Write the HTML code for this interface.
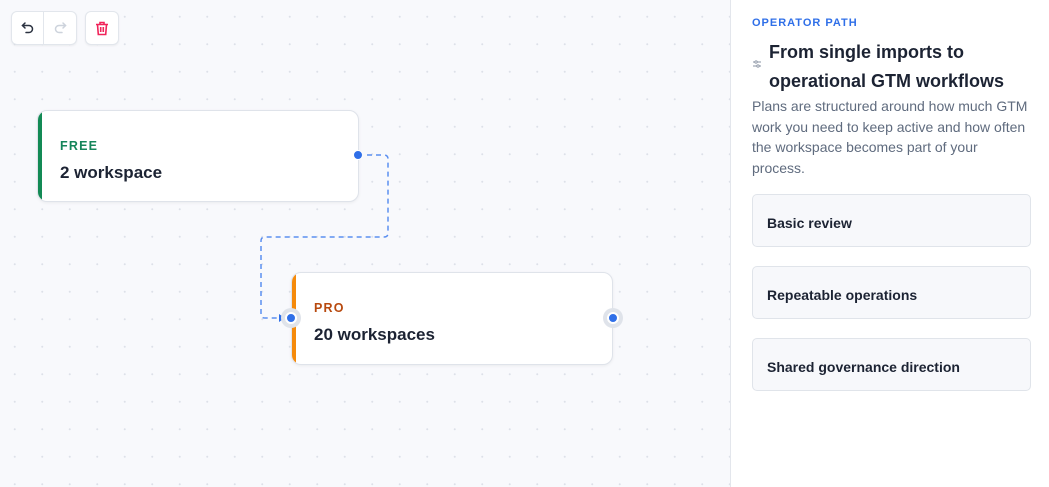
<!DOCTYPE html>
<html><head><style>
*{box-sizing:border-box;margin:0;padding:0}
body{width:1049px;height:487px;overflow:hidden;font-family:"Liberation Sans",Arial,sans-serif;background:#f8f9fc;position:relative}
.canvas{position:absolute;left:0;top:0;width:730px;height:487px;background-color:#f8f9fc;background-image:radial-gradient(circle,#dde1e8 0.8px,transparent 1.2px);background-size:27.5px 27.5px;background-position:1px 3px}
.tb{position:absolute;top:11px;height:34px;background:#fff;border:1px solid #e2e6ec;border-radius:6px;box-shadow:0 1px 2px rgba(0,0,0,.06);display:flex}
.tb div{width:32px;height:32px;display:flex;align-items:center;justify-content:center}
.node{position:absolute;background:#fff;border:1px solid #dfe3ea;border-radius:10px;box-shadow:0 1px 3px rgba(0,0,0,.06);overflow:hidden}
.node .bar{position:absolute;left:0;top:0;bottom:0;width:4px}
.lab{position:absolute;left:22px;top:28px;font-size:12.5px;font-weight:bold;letter-spacing:1.2px}
.val{position:absolute;left:22px;top:52px;font-size:17px;font-weight:bold;color:#1c2333}
.h{position:absolute;border-radius:50%}
.panel{position:absolute;left:730px;top:0;width:319px;height:487px;background:#fff;border-left:1px solid #e3e6ec}
.card{position:absolute;left:21px;width:279px;height:53px;background:#f7f8fb;border:1px solid #e0e4ea;border-radius:5px;font-size:14px;font-weight:bold;color:#1c2333;padding:20px 0 0 14px}
</style></head><body>
<div class="canvas"></div>
<div class="tb" style="left:11px;width:66px"><div style="border-right:1px solid #e2e6ec"><svg width="14" height="14" viewBox="0 0 14 14" fill="none" stroke="#2b3240" stroke-width="1.5" stroke-linecap="round"><path d="M4 2L1.5 4.5 4 7"/><path d="M1.5 4.5H8a3.5 3.5 0 0 1 0 7H5"/></svg></div><div><svg width="14" height="14" viewBox="0 0 14 14" fill="none" stroke="#cdd3dc" stroke-width="1.5" stroke-linecap="round"><path d="M10 2l2.5 2.5L10 7"/><path d="M12.5 4.5H6a3.5 3.5 0 0 0 0 7h3"/></svg></div></div>
<div class="tb" style="left:85px;width:34px"><div><svg width="14" height="15" viewBox="0 0 14 15" fill="none" stroke="#f0245a" stroke-width="1.6"><path d="M1 3.5h12M5 3.5V1.5h4v2M2.5 3.5l.8 10h7.4l.8-10M5.7 6v5M8.3 6v5"/></svg></div></div>
<svg style="position:absolute;left:0;top:0" width="730" height="487"><path d="M358 155H384q4 0 4 4V233q0 4-4 4H265q-4 0-4 4V314q0 4 4 4H280" fill="none" stroke="#5b8ff0" stroke-width="1.5" stroke-dasharray="5 4"/><path d="M279 314l6 4-6 4z" fill="#2f6fe8"/></svg>
<div class="node" style="left:37px;top:110px;width:322px;height:92px"><div class="bar" style="background:#138a55"></div><div class="lab" style="color:#15855a">FREE</div><div class="val">2 workspace</div></div>
<div class="h" style="left:353px;top:150px;width:10px;height:10px;background:#2f6fe8;border:1px solid #fff"></div>
<div class="node" style="left:291px;top:272px;width:322px;height:93px"><div class="bar" style="background:#f58a0b"></div><div class="lab" style="color:#b8490e">PRO</div><div class="val">20 workspaces</div></div>
<div class="h" style="left:281px;top:308px;width:20px;height:20px;background:#dfe3ea"></div><div class="h" style="left:285px;top:312px;width:12px;height:12px;background:#2f6fe8;border:2px solid #fff"></div>
<div class="h" style="left:603px;top:308px;width:20px;height:20px;background:#dfe3ea"></div><div class="h" style="left:607px;top:312px;width:12px;height:12px;background:#2f6fe8;border:2px solid #fff"></div>
<div class="panel">
<div style="position:absolute;left:21px;top:17px;font-size:11px;font-weight:bold;letter-spacing:1px;color:#2f6fe8">OPERATOR PATH</div>
<svg style="position:absolute;left:22px;top:60px" width="8" height="8" viewBox="0 0 8 8" fill="none" stroke="#8a93a3" stroke-width="0.9"><path d="M0 2h8M0 6h8"/><circle cx="3" cy="2" r="1.2" fill="#fff"/><circle cx="5" cy="6" r="1.2" fill="#fff"/></svg>
<div style="position:absolute;left:38px;top:38px;font-size:18px;font-weight:bold;color:#1c2333;line-height:28.5px">From single imports to<br>operational GTM workflows</div>
<div style="position:absolute;left:21px;top:96px;width:280px;font-size:14px;color:#5f6b7e;line-height:20.5px">Plans are structured around how much GTM work you need to keep active and how often the workspace becomes part of your process.</div>
<div class="card" style="top:194px">Basic review</div>
<div class="card" style="top:266px">Repeatable operations</div>
<div class="card" style="top:338px">Shared governance direction</div>
</div>
</body></html>
